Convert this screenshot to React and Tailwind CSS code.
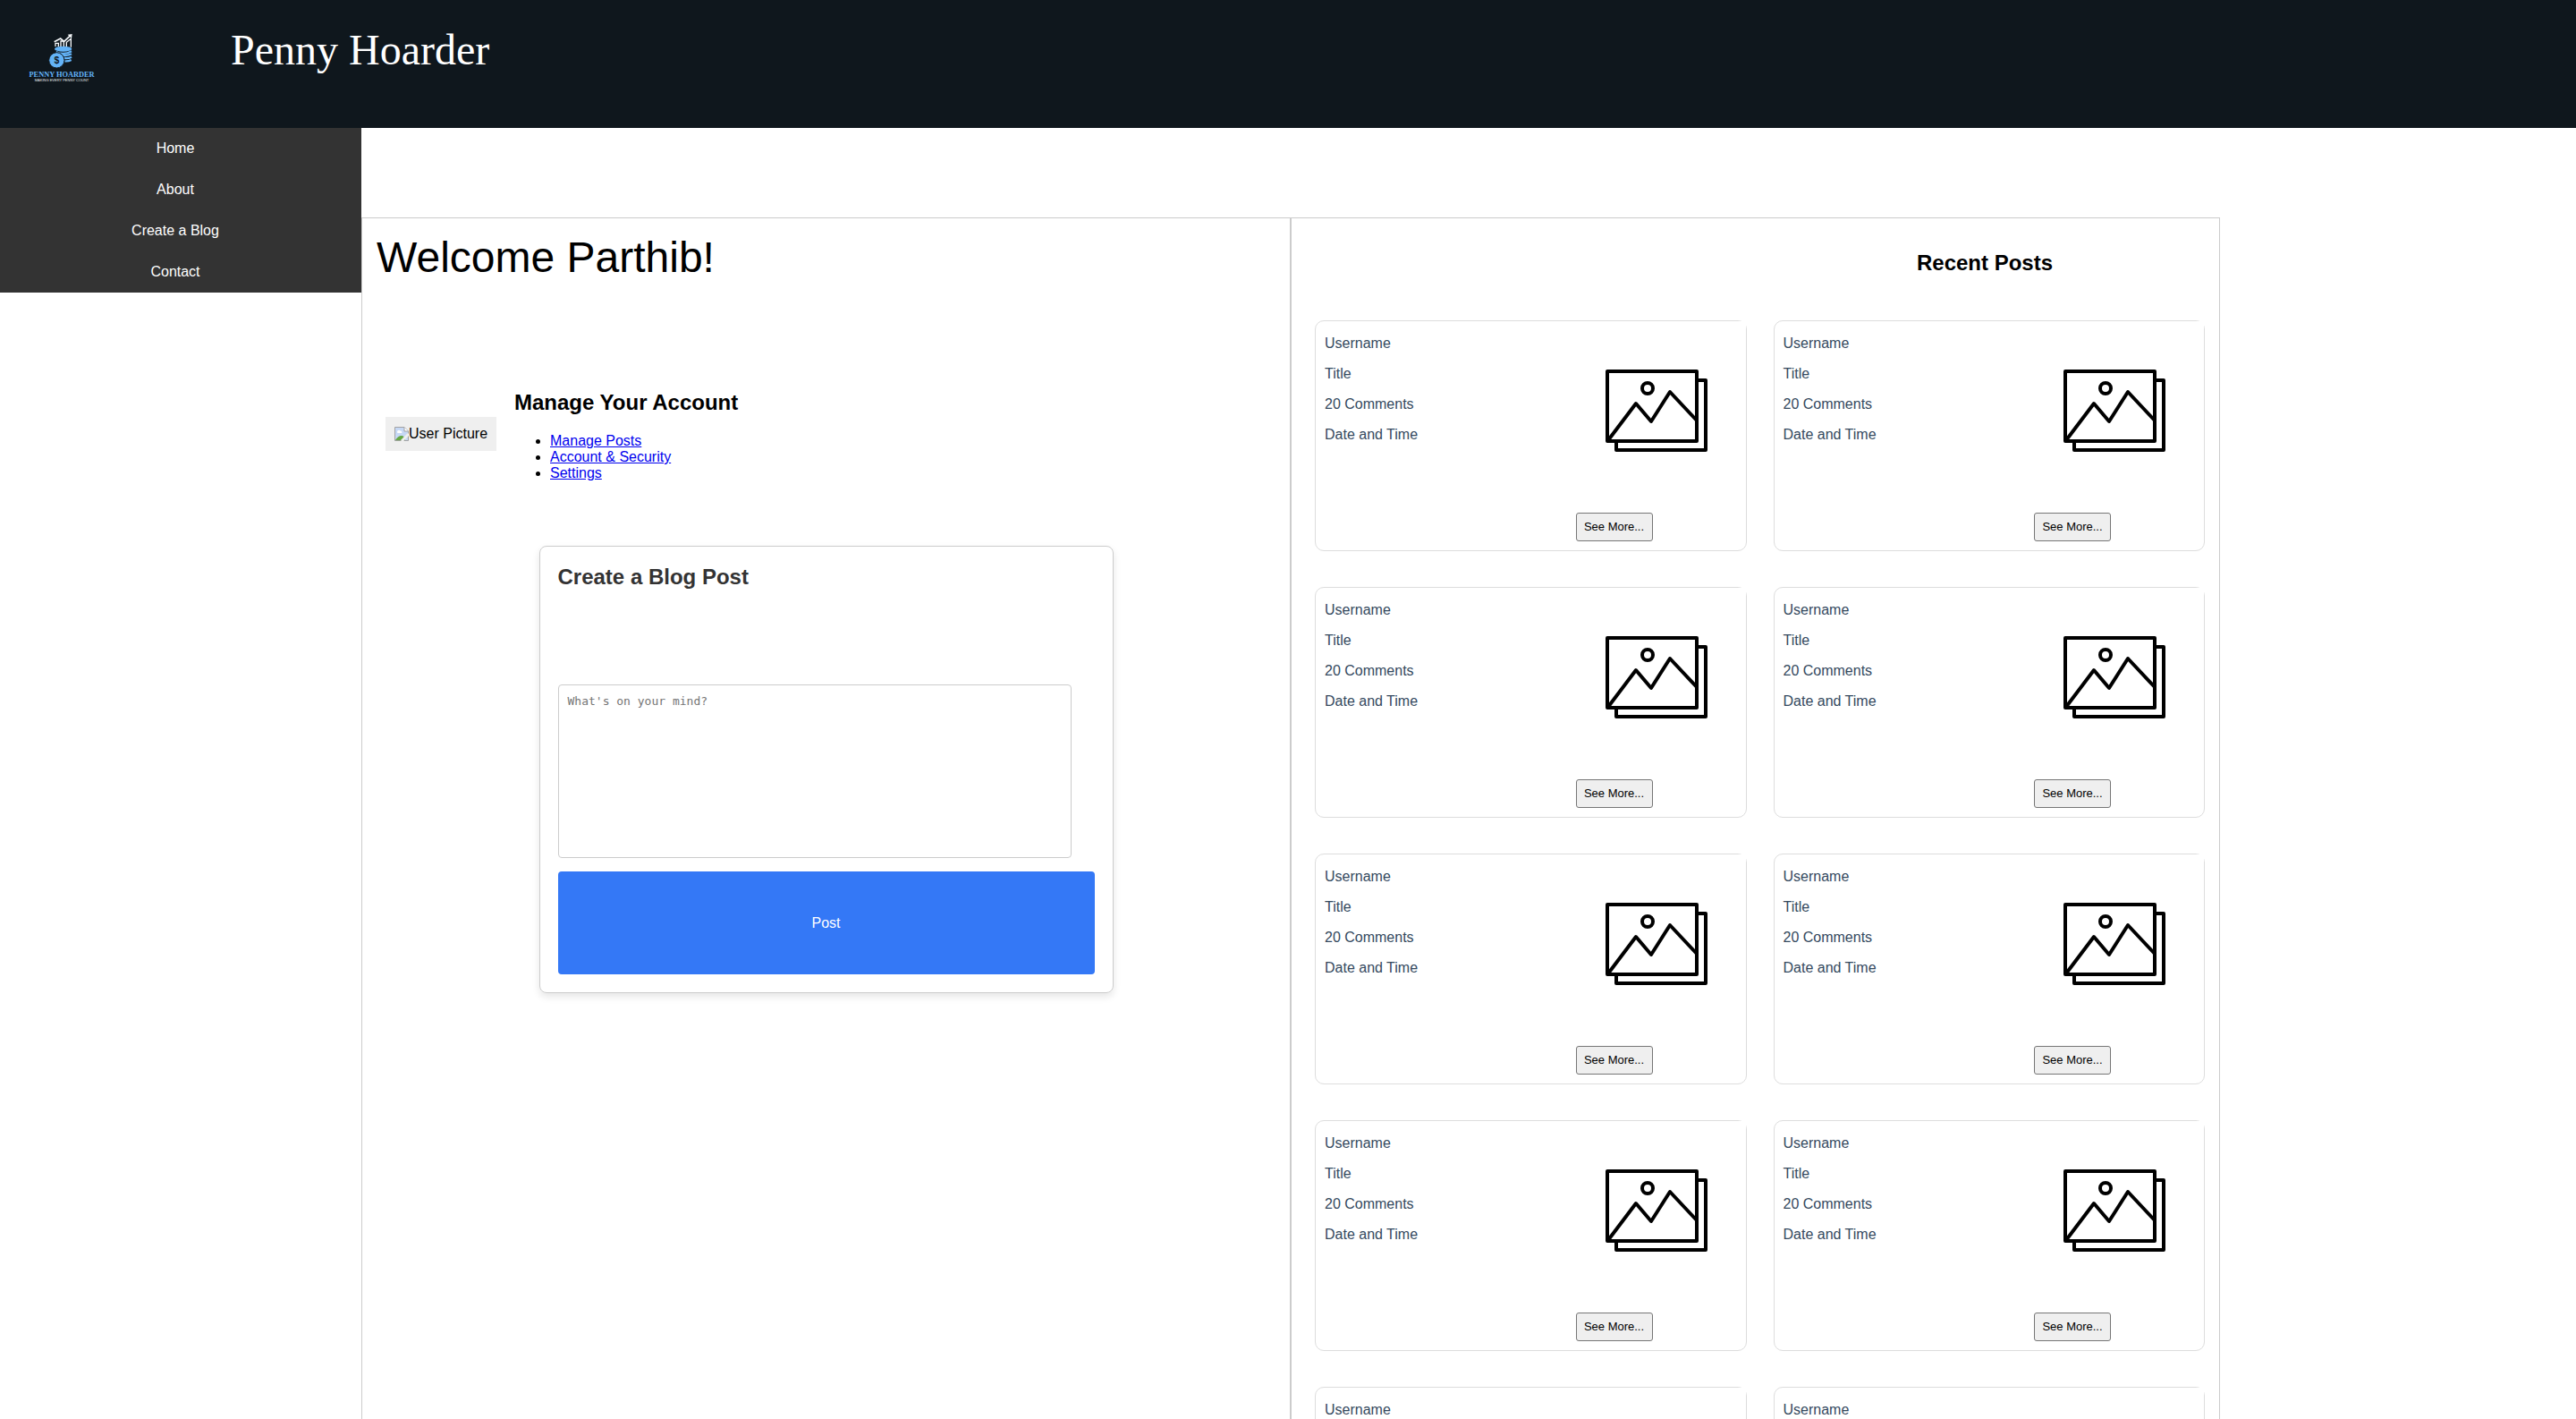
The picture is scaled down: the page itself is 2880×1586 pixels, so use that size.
const navItems = ['Home', 'About', 'Create a Blog', 'Contact'];
const accountLinks = ['Manage Posts', 'Account & Security', 'Settings'];
const posts = Array.from({ length: 10 }, (_, id) => ({
  id,
  username: 'Username',
  title: 'Title',
  comments: '20 Comments',
  date: 'Date and Time',
}));

function Logo() {
  return (
    <svg width="100" height="70" viewBox="0 0 300 210" role="img" aria-label="Penny Hoarder logo" className="shrink-0">
      <g fill="none" stroke="#f4f7f9" strokeWidth="5">
        <path d="M122 50 L143 39 L155 49 L174 31" />
        <path d="M126 66 V55 H136 V66 M144 66 V48 H154 V66 M163 66 V52 L178 40 V68" strokeWidth="4" />
      </g>
      <path d="M167 26 L182 24 L180 39 Z" fill="#f4f7f9" />
      <g fill="none" stroke="#63b3f7" strokeWidth="7">
        <path d="M128 84 Q154 97 180 82" />
        <path d="M146 95 Q168 98 180 91" />
        <path d="M154 105 Q170 107 180 101" />
        <path d="M157 115 Q170 116 179 111" />
      </g>
      <ellipse cx="152" cy="74" rx="29" ry="9" fill="#63b3f7" />
      <circle cx="130" cy="112" r="26" fill="#63b3f7" stroke="#0f171d" strokeWidth="3" />
      <text x="130" y="123" textAnchor="middle" fontSize="31" fontWeight="700" fontFamily="Liberation Sans, sans-serif" fill="#0f171d">$</text>
      <text x="147" y="167" textAnchor="middle" fontSize="25" fontWeight="700" fontFamily="Liberation Serif, serif" fill="#63b3f7">PENNY HOARDER</text>
      <text x="147" y="182" textAnchor="middle" fontSize="12" fontFamily="Liberation Sans, sans-serif" fill="#e8ecef">MAKING EVERY PENNY COUNT</text>
    </svg>
  );
}

function BrokenImage() {
  return (
    <svg width="16" height="16" viewBox="0 0 16 16" className="shrink-0" aria-hidden="true">
      <path d="M0.5 0.5 H11 L15.5 5 V15.5 H0.5 Z" fill="#c6d8f5" />
      <path d="M3 6 a2 2 0 0 1 3.500 -1.500 a1.500 1.500 0 0 1 1.500 2.500 H3.500 Z" fill="#fff" />
      <path d="M1 15 Q4 10 8 10 Q11 10 12 15 Z" fill="#65a844" />
      <path d="M0.500 15.500 V0.500 H11 L15.500 5 V15.500 Z" fill="none" stroke="#a3a3a3" />
      <path d="M11 0.500 V5 H15.500" fill="#fff" stroke="#a3a3a3" />
      <path d="M8 16 L16 8" stroke="#efefef" strokeWidth="3" />
    </svg>
  );
}

function PicturePlaceholder() {
  return (
    <svg
      width="200"
      height="200"
      viewBox="0 0 200 200"
      className="bg-white"
      fill="none"
      stroke="#000"
      strokeWidth="4"
      strokeLinejoin="round"
      role="img"
      aria-label="Post"
    >
      <path d="M145 66 H155 V144 H55 V134" />
      <rect x="45" y="56" width="100" height="78" />
      <circle cx="90" cy="75" r="6" />
      <path d="M46 133 L77 92 L94 112 L115 79 L145 111" />
    </svg>
  );
}

function PostCard({ post }) {
  return (
    <article className="flex h-[258px] justify-between rounded-[10px] border border-[#ddd] text-[#34495e]">
      <div className="flex flex-col gap-4 pt-4 pl-[10px]">
        <p>{post.username}</p>
        <p>{post.title}</p>
        <p>{post.comments}</p>
        <p>{post.date}</p>
      </div>
      <div className="flex flex-col items-start">
        <PicturePlaceholder />
        <button
          type="button"
          className="mt-auto mb-[10px] ml-[10px] h-8 w-[86px] rounded-[3px] border border-[#767676] bg-[#efefef] text-[13px] text-black"
        >
          See More...
        </button>
      </div>
    </article>
  );
}

export default function App() {
  return (
    <div className="h-screen overflow-auto bg-white font-['Liberation_Sans',Arial,sans-serif] text-[16px] leading-[18px] text-black [scrollbar-width:none]">
      <header className="flex h-[143px] items-start gap-[138px] bg-[#0f171d] pl-5">
        <div className="pt-[30px]">
          <Logo />
        </div>
        <h1 className="pt-7 font-['Liberation_Serif','Times_New_Roman',serif] text-[48px] leading-[56px] text-white">
          Penny Hoarder
        </h1>
      </header>

      <div className="flex items-start">
        <nav className="w-[404px] shrink-0 bg-[#333] pr-3">
          <ul>
            {navItems.map((item) => (
              <li key={item}>
                <a href="#" className="block py-[14px] text-center text-white">
                  {item}
                </a>
              </li>
            ))}
          </ul>
        </nav>

        <main className="mt-[100px] mr-[398px] grid flex-1 grid-cols-2">
          <section className="border border-[#ccc]">
            <h2 className="pt-4 pl-4 text-[48px] leading-[56px]">Welcome Parthib!</h2>

            <div className="mt-[120px] flex items-start gap-5 pl-[26px]">
              <div className="mt-[30px] flex h-[38px] w-[124px] items-center bg-[#efefef] pl-[10px]">
                <BrokenImage />
                <span className="whitespace-nowrap">User Picture</span>
              </div>
              <div>
                <h3 className="text-[24px] leading-[28px] font-bold">Manage Your Account</h3>
                <ul className="mt-5 list-disc pl-10">
                  {accountLinks.map((item) => (
                    <li key={item}>
                      <a href="#" className="text-[#0000ee] underline">
                        {item}
                      </a>
                    </li>
                  ))}
                </ul>
              </div>
            </div>

            <form className="mx-auto mt-[72px] w-[642px] max-w-full rounded-[8px] border border-[#ccc] p-5 shadow-[0_4px_8px_rgba(0,0,0,0.1)]">
              <h3 id="create-post" className="text-[24px] leading-[28px] font-bold text-[#333]">
                Create a Blog Post
              </h3>
              <textarea
                aria-labelledby="create-post"
                placeholder="What's on your mind?"
                className="mt-[106px] block h-[194px] w-[574px] max-w-full resize-none rounded-[4px] border border-[#ccc] p-[10px] font-['DejaVu_Sans_Mono',monospace] text-[13px] leading-[15px] placeholder:text-[#757575]"
              />
              <button type="button" className="mt-[15px] block h-[115px] w-full rounded-[4px] bg-[#3478f6] text-white">
                Post
              </button>
            </form>
          </section>

          <section className="border border-[#ccc] pr-4 pb-10 pl-[26px]">
            <h2 className="-mr-4 mt-9 pl-[487px] text-center text-[24px] leading-[28px] font-bold">Recent Posts</h2>
            <div className="mt-[50px] grid grid-cols-2 gap-x-[30px] gap-y-10">
              {posts.map((post) => (
                <PostCard key={post.id} post={post} />
              ))}
            </div>
          </section>
        </main>
      </div>
    </div>
  );
}
